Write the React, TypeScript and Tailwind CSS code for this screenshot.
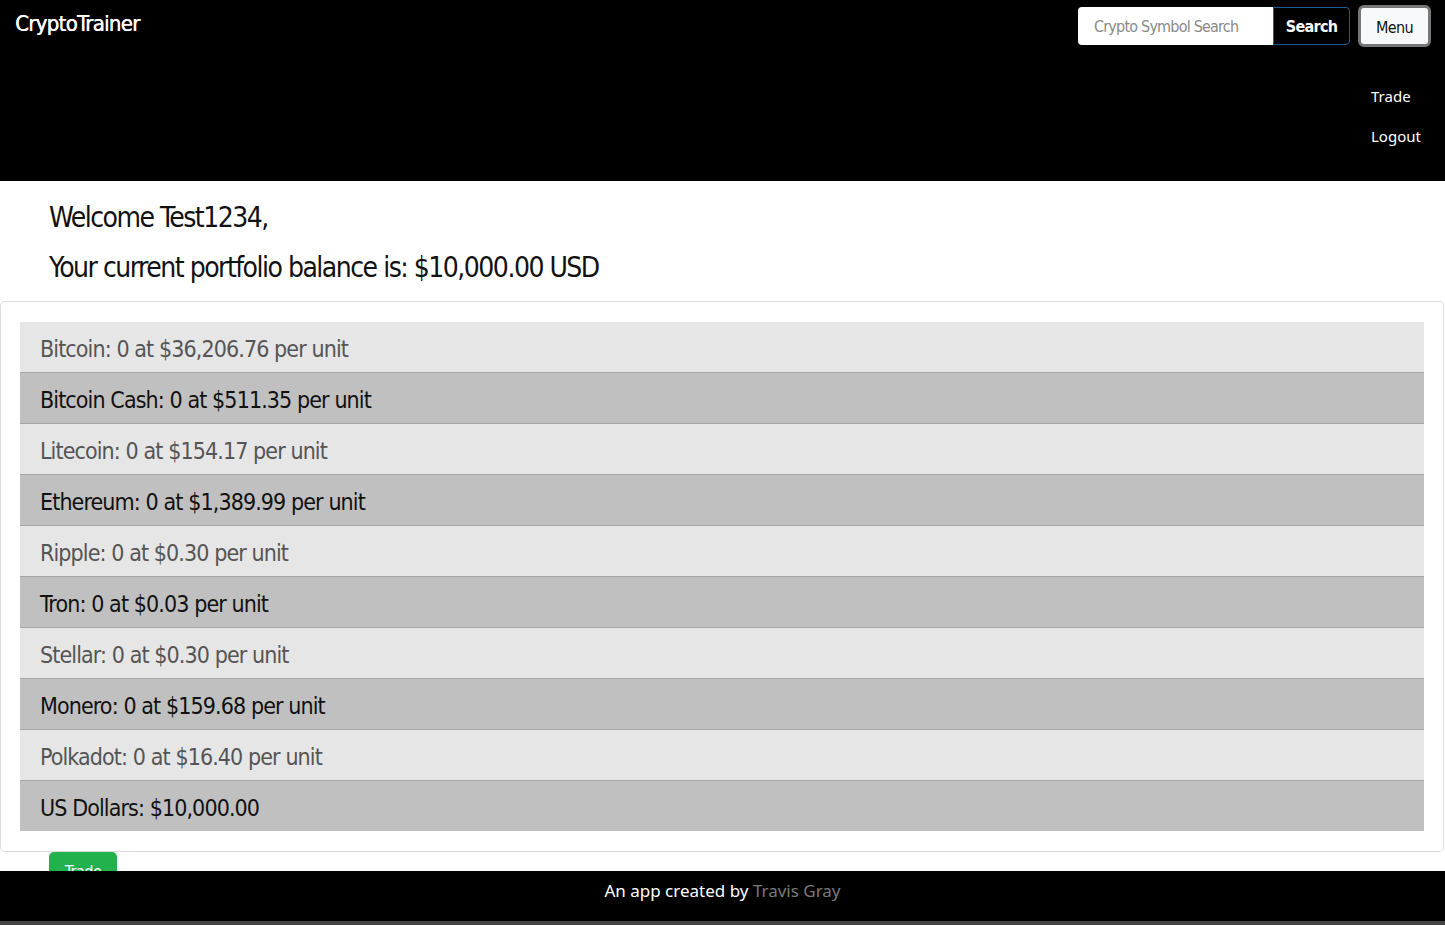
import React from "react";

const holdings = [
    { name: "Bitcoin", qty: 0, price: "$36,206.76" },
    { name: "Bitcoin Cash", qty: 0, price: "$511.35" },
    { name: "Litecoin", qty: 0, price: "$154.17" },
    { name: "Ethereum", qty: 0, price: "$1,389.99" },
    { name: "Ripple", qty: 0, price: "$0.30" },
    { name: "Tron", qty: 0, price: "$0.03" },
    { name: "Stellar", qty: 0, price: "$0.30" },
    { name: "Monero", qty: 0, price: "$159.68" },
    { name: "Polkadot", qty: 0, price: "$16.40" },
];

const narrow = "font-['Liberation_Sans_Narrow','DejaVu_Sans_Condensed',sans-serif]";

export default function App() {
    return (
        <div className={`min-h-[925px] bg-white ${narrow}`}>
            <header className="h-[181px] bg-black flex flex-col">
                <div className="flex items-start justify-between">
                    <a href="#" className="ml-[15px] mt-[10px] text-[22px] leading-[28px] text-white tracking-[-0.7px] [text-shadow:0.4px_0_0_#fff]">
                        CryptoTrainer
                    </a>
                    <div className="flex items-center mt-[5px] mr-[14px]">
                        <input
                            type="text"
                            placeholder="Crypto Symbol Search"
                            className="w-[195px] h-[38px] rounded-l-[4px] bg-white px-4 text-[16px] tracking-[-0.8px] text-gray-900 placeholder:text-[#8a8a8a] outline-none"
                        />
                        <button className="h-[38px] w-[77px] rounded-r-[4px] border border-[#1f5c99] bg-black pt-[2px] text-[16px] font-bold tracking-[-0.7px] text-white">
                            Search
                        </button>
                        <button className="ml-[8px] h-[42px] w-[73px] rounded-[6px] border-[3px] border-[#777] bg-[#f8f9fa] pt-[3px] text-[16px] tracking-[-0.6px] text-[#111]">
                            Menu
                        </button>
                    </div>
                </div>
                <nav className="mt-[38px] ml-auto mr-[24px] flex w-[50px] flex-col font-['Noto_Sans','Open_Sans',sans-serif] text-[15px] text-white">
                    <a href="#" className="leading-[22px]">Trade</a>
                    <a href="#" className="mt-[18px] leading-[22px]">Logout</a>
                </nav>
            </header>

            <section className="h-[120px] px-[49px] pt-[20px] text-[#111]">
                <h2 className="text-[28px] leading-[34px] tracking-[-1.5px]">Welcome Test1234,</h2>
                <h2 className="mt-[16px] text-[28px] leading-[34px] tracking-[-1.5px]">
                    Your current portfolio balance is: $10,000.00 USD
                </h2>
            </section>

            <div className="mr-px rounded-[5px] border border-[#dcdcdc] px-[19px] pt-[20px] pb-[20px]">
                <ul>
                    {holdings.map((h, i) => (
                        <li
                            key={h.name}
                            className={
                                i % 2 === 0
                                    ? "h-[51px] border-b border-[#a6a6a6] bg-[#e6e6e6] px-[20px] text-[23px] leading-[54px] tracking-[-0.9px] text-[#555]"
                                    : "h-[51px] border-b border-[#a6a6a6] bg-[#c0c0c0] px-[20px] text-[23px] leading-[54px] tracking-[-0.9px] text-[#111]"
                            }
                        >
                            {h.name}: {h.qty} at {h.price} per unit
                        </li>
                    ))}
                    <li className="h-[50px] bg-[#c0c0c0] px-[20px] text-[23px] leading-[54px] tracking-[-0.9px] text-[#111]">
                        US Dollars: $10,000.00
                    </li>
                </ul>
            </div>

            <div className="h-[19px] overflow-hidden px-[49px]">
                <button className="h-[36px] w-[68px] rounded-[5px] bg-[#22b14c] pt-[4px] text-[16px] tracking-[-0.5px] text-white">
                    Trade
                </button>
            </div>

            <footer className="h-[50px] bg-black text-center font-['Noto_Sans','Open_Sans',sans-serif] text-[17px] leading-[40px] text-white">
                An app created by <span className="text-[#7a7a7a]">Travis Gray</span>
            </footer>
            <div className="h-[4px] bg-[#444]" />
        </div>
    );
}
